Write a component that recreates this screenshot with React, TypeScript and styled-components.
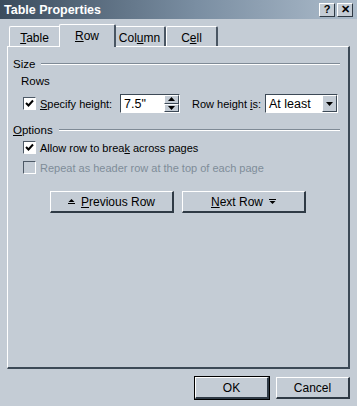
import React from "react";
import styled, { createGlobalStyle } from "styled-components";

const GlobalStyle = createGlobalStyle`
  html, body { margin: 0; padding: 0; }
  body {
    background: #c4ccd5;
    font-family: "Liberation Sans", Arial, sans-serif;
    font-size: 11px;
    color: #000;
  }
`;

const Dialog = styled.div`
  width: 357px;
  height: 406px;
  background: #c4ccd5;
  display: flex;
  flex-direction: column;
  overflow: hidden;
`;

const TitleBar = styled.div`
  height: 19px;
  background: linear-gradient(to right, #3b4c5d, #7a8ea2 55%, #adbccb);
  display: flex;
  align-items: center;
  padding: 0 4px 0 4px;
`;

const TitleText = styled.div`
  flex: 1;
  color: #fff;
  font-weight: bold;
  font-size: 12.5px;
`;

const CapButton = styled.div`
  width: 16px;
  height: 14px;
  box-sizing: border-box;
  background: #c4ccd5;
  border: 1px solid;
  border-color: #fff #2f3a45 #2f3a45 #fff;
  margin-left: 2px;
  display: flex;
  align-items: center;
  justify-content: center;
  font-weight: bold;
  font-size: 11px;
  line-height: 1;
  color: #000;
`;

const Body = styled.div`
  flex: 1;
  display: flex;
  flex-direction: column;
  padding: 5px 7px 0 7px;
`;

const TabStrip = styled.div`
  display: flex;
  align-items: flex-end;
  height: 22px;
  padding-left: 2px;
`;

const Tab = styled.div<{ $active?: boolean }>`
  box-sizing: border-box;
  width: ${(p) => (p.$active ? 57 : 52)}px;
  height: ${(p) => (p.$active ? 23 : 20)}px;
  margin: ${(p) => (p.$active ? "0 -2px 0 -2px" : "0")};
  position: relative;
  z-index: ${(p) => (p.$active ? 2 : 1)};
  background: #c4ccd5;
  border-top: 1px solid #fff;
  border-left: 1px solid #fff;
  border-right: 2px solid #4a5663;
  border-radius: 2px 2px 0 0;
  display: flex;
  align-items: center;
  justify-content: center;
  font-size: 12px;
  padding-top: ${(p) => (p.$active ? 0 : 2)}px;
  margin-bottom: ${(p) => (p.$active ? -1 : 0)}px;
`;

const Panel = styled.div`
  box-sizing: border-box;
  height: 323px;
  width: 343px;
  border: 1px solid;
  border-color: #fff #3c4956 #3c4956 #fff;
  border-width: 1px 2px 2px 1px;
  padding: 10px 8px 0 5px;
  display: flex;
  flex-direction: column;
`;

const GroupHead = styled.div<{ $mb?: number }>`
  display: flex;
  align-items: center;
  gap: 6px;
  height: 14px;
  margin-bottom: ${(p) => p.$mb ?? 4}px;
  font-size: 11.5px;
  &::after {
    content: "";
    flex: 1;
    border-top: 1px solid #7f8a96;
    border-bottom: 1px solid #fff;
  }
`;

const SubHead = styled.div`
  padding-left: 8px;
  height: 14px;
  margin-bottom: 5px;
  font-size: 11.5px;
`;

const Row = styled.div<{ $indent?: number; $mb?: number }>`
  display: flex;
  align-items: center;
  padding-left: ${(p) => p.$indent ?? 10}px;
  margin-bottom: ${(p) => p.$mb ?? 0}px;
  height: 19px;
`;

const Box = styled.span<{ $disabled?: boolean }>`
  width: 13px;
  height: 13px;
  box-sizing: border-box;
  background: ${(p) => (p.$disabled ? "#c4ccd5" : "#fff")};
  border: 1px solid;
  border-color: #4d5966 #fff #fff #4d5966;
  display: inline-flex;
  align-items: center;
  justify-content: center;
  margin-right: 4px;
  flex: none;
`;

const Label = styled.span<{ $disabled?: boolean; $w?: number }>`
  color: ${(p) => (p.$disabled ? "#7f8c99" : "#000")};
  white-space: nowrap;
  ${(p) => (p.$w ? `width: ${p.$w}px; flex: none;` : "")}
`;

const U = styled.span`
  text-decoration: underline;
`;

const Gap = styled.div<{ $w: number }>`
  width: ${(p) => p.$w}px;
  flex: none;
`;

const Field = styled.div<{ $w: number }>`
  width: ${(p) => p.$w}px;
  height: 19px;
  box-sizing: border-box;
  border: 1px solid;
  border-color: #3c4956 #fff #fff #3c4956;
  background: #fff;
  display: flex;
  align-items: stretch;
  flex: none;
`;

const FieldText = styled.div`
  flex: 1;
  padding-left: 3px;
  display: flex;
  align-items: center;
  font-size: 12.5px;
  white-space: nowrap;
  overflow: hidden;
`;

const SpinCol = styled.div`
  width: 15px;
  display: flex;
  flex-direction: column;
`;

const SpinBtn = styled.div`
  flex: 1;
  box-sizing: border-box;
  background: #c4ccd5;
  border: 1px solid;
  border-color: #fff #3c4956 #3c4956 #fff;
  display: flex;
  align-items: center;
  justify-content: center;
`;

const DropBtn = styled.div`
  width: 15px;
  box-sizing: border-box;
  background: #c4ccd5;
  border: 1px solid;
  border-color: #fff #3c4956 #3c4956 #fff;
  display: flex;
  align-items: center;
  justify-content: center;
`;

const NavRow = styled.div`
  display: flex;
  gap: 8px;
  padding-left: 37px;
  margin-top: 14px;
`;

const PushButton = styled.div<{ $w: number; $default?: boolean }>`
  width: ${(p) => p.$w}px;
  height: 22px;
  box-sizing: border-box;
  background: #c4ccd5;
  border: 1px solid;
  border-color: #fff #2f3a45 #2f3a45 #fff;
  border-width: 1px 2px 2px 1px;
  outline: ${(p) => (p.$default ? "1px solid #000" : "none")};
  outline-offset: 0;
  display: flex;
  align-items: center;
  justify-content: center;
  gap: 6px;
  white-space: nowrap;
  font-size: 12px;
`;

const Footer = styled.div`
  display: flex;
  justify-content: flex-end;
  gap: 7px;
  padding: 8px 0 0 0;
`;

const Check = () => (
  <svg width="9" height="9" viewBox="0 0 9 9">
    <path d="M1 4 L3.5 6.5 L8 1.5" fill="none" stroke="#000" strokeWidth="2" />
  </svg>
);

const Tri = ({ up }: { up?: boolean }) => (
  <svg width="7" height="4" viewBox="0 0 7 4">
    <path d={up ? "M0 4 L3.5 0 L7 4 Z" : "M0 0 L7 0 L3.5 4 Z"} fill="#000" />
  </svg>
);

const BarArrow = ({ up }: { up?: boolean }) => (
  <svg width="7" height="7" viewBox="0 0 7 7">
    {up ? (
      <>
        <path d="M0.5 4 L3.5 1 L6.5 4 Z" fill="#000" />
        <rect x="0" y="5" width="7" height="1" fill="#000" />
      </>
    ) : (
      <>
        <rect x="0" y="1" width="7" height="1" fill="#000" />
        <path d="M0.5 3 L3.5 6 L6.5 3 Z" fill="#000" />
      </>
    )}
  </svg>
);

export default function App() {
  return (
    <>
      <GlobalStyle />
      <Dialog>
        <TitleBar>
          <TitleText>Table Properties</TitleText>
          <CapButton>?</CapButton>
          <CapButton>✕</CapButton>
        </TitleBar>
        <Body>
          <TabStrip>
            <Tab><span><U>T</U>able</span></Tab>
            <Tab $active><span><U>R</U>ow</span></Tab>
            <Tab><span>Col<U>u</U>mn</span></Tab>
            <Tab><span>C<U>e</U>ll</span></Tab>
          </TabStrip>
          <Panel>
            <GroupHead><span>Size</span></GroupHead>
            <SubHead>Rows</SubHead>
            <Row $mb={10}>
              <Box><Check /></Box>
              <Label $w={70}><U>S</U>pecify height:</Label>
              <Gap $w={10} />
              <Field $w={60}>
                <FieldText>7.5"</FieldText>
                <SpinCol>
                  <SpinBtn><Tri up /></SpinBtn>
                  <SpinBtn><Tri /></SpinBtn>
                </SpinCol>
              </Field>
              <Gap $w={12} />
              <Label $w={67}>Row height <U>i</U>s:</Label>
              <Gap $w={6} />
              <Field $w={73}>
                <FieldText>At least</FieldText>
                <DropBtn><Tri /></DropBtn>
              </Field>
            </Row>
            <GroupHead $mb={1}><span><U>O</U>ptions</span></GroupHead>
            <Row $mb={1}>
              <Box><Check /></Box>
              <Label>Allow row to brea<U>k</U> across pages</Label>
            </Row>
            <Row>
              <Box $disabled />
              <Label $disabled>Repeat as header row at the top of each page</Label>
            </Row>
            <NavRow>
              <PushButton $w={124}>
                <BarArrow up />
                <span><U>P</U>revious Row</span>
              </PushButton>
              <PushButton $w={124}>
                <span><U>N</U>ext Row</span>
                <BarArrow />
              </PushButton>
            </NavRow>
          </Panel>
          <Footer>
            <PushButton $w={74} $default>OK</PushButton>
            <PushButton $w={74}>Cancel</PushButton>
          </Footer>
        </Body>
      </Dialog>
    </>
  );
}
